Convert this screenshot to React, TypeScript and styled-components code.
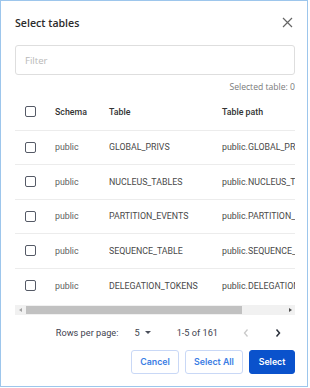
import React from "react";
import styled, { createGlobalStyle } from "styled-components";

const Global = createGlobalStyle`
  html, body { margin: 0; padding: 0; background: #ffffff; }
  body { font-family: "Open Sans", "Noto Sans", sans-serif; }
  * { box-sizing: border-box; }
`;

const Frame = styled.div`
  width: 308px;
  height: 387px;
  border: 1px solid #9dc6ec;
  background: #fff;
  padding: 0 12px 0 14px;
  display: flex;
  flex-direction: column;
`;

const Header = styled.div`
  height: 42px;
  display: flex;
  align-items: center;
  justify-content: space-between;
  padding-top: 1px;
`;

const Title = styled.h2`
  margin: 0;
  font-family: "Open Sans", sans-serif;
  font-size: 10.6px;
  font-weight: 600;
  color: #2b2b2b;
`;

const CloseButton = styled.button`
  border: none;
  background: none;
  padding: 0;
  width: 16px;
  height: 16px;
  margin-right: 0;
  display: flex;
  align-items: center;
  justify-content: center;
  color: #666;
`;

const FilterInput = styled.input`
  margin-top: 2px;
  height: 30px;
  width: 100%;
  border: 1px solid #dedede;
  border-radius: 3px;
  padding: 0 9px;
  font-family: "Open Sans", sans-serif;
  font-size: 9.6px;
  color: #333;
  outline: none;
  &::placeholder { color: #b8b8b8; }
`;

const SelectedCount = styled.div`
  margin-top: 6px;
  height: 12px;
  line-height: 12px;
  text-align: right;
  font-family: "Open Sans", sans-serif;
  font-size: 8.6px;
  color: #7a7a7a;
`;

const TableViewport = styled.div`
  margin-top: 1px;
  width: 100%;
  overflow: hidden;
`;

const Table = styled.table`
  border-collapse: collapse;
  width: 338px;
  font-family: Roboto, sans-serif;
  font-size: 8.8px;
  table-layout: fixed;
`;

const HeadCell = styled.th<{ $w: number }>`
  width: ${(p) => p.$w}px;
  height: 36px;
  padding: 0;
  text-align: left;
  font-weight: 500;
  color: #333;
  border-bottom: 1px solid #ececec;
  white-space: nowrap;
`;

const Cell = styled.td<{ $muted?: boolean }>`
  height: 34.5px;
  padding: 0;
  color: ${(p) => (p.$muted ? "#5e5e5e" : "#4a4a4a")};
  border-bottom: 1px solid #ececec;
  white-space: nowrap;
  overflow: hidden;
`;

const LastRowCell = styled(Cell)`
  border-bottom: none;
`;

const Check = styled.span`
  display: block;
  width: 11px;
  height: 11px;
  margin-left: 10px;
  border: 1.6px solid #555a66;
  border-radius: 2px;
`;

const ScrollTrack = styled.div`
  margin-top: 2px;
  height: 10px;
  background: #f1f1f1;
  display: flex;
  align-items: center;
  justify-content: space-between;
  padding: 0 3px 0 4px;
`;

const ScrollThumb = styled.div`
  height: 8px;
  width: 216px;
  margin-left: 4px;
  margin-right: auto;
  background: #c1c1c1;
`;

const Arrow = styled.span<{ $dir: "l" | "r" }>`
  width: 0;
  height: 0;
  border-top: 2.5px solid transparent;
  border-bottom: 2.5px solid transparent;
  ${(p) =>
    p.$dir === "l"
      ? "border-right: 3px solid #a3a3a3;"
      : "border-left: 3px solid #505050;"}
`;

const Pagination = styled.div`
  margin-top: 3px;
  height: 30px;
  display: flex;
  align-items: center;
  justify-content: flex-end;
  padding-right: 5px;
  font-family: Roboto, sans-serif;
  font-size: 9.2px;
  color: #3f4450;
`;

const RowsLabel = styled.span`
  margin-right: 16px;
`;

const RowsSelect = styled.span`
  display: flex;
  align-items: center;
  gap: 5px;
  margin-right: 26px;
`;

const Caret = styled.span`
  width: 0;
  height: 0;
  border-left: 3px solid transparent;
  border-right: 3px solid transparent;
  border-top: 3px solid #4a4f5a;
`;

const Range = styled.span`
  margin-right: 16px;
`;

const NavButton = styled.button<{ $disabled?: boolean }>`
  width: 24px;
  height: 24px;
  border: none;
  background: none;
  padding: 0;
  display: flex;
  align-items: center;
  justify-content: center;
  color: ${(p) => (p.$disabled ? "#c9c9c9" : "#2a2f3a")};
  & + & { margin-left: 8px; }
`;

const Actions = styled.div`
  margin-top: 2px;
  display: flex;
  justify-content: flex-end;
  gap: 6px;
`;

const Button = styled.button<{ $primary?: boolean; $w: number }>`
  height: 24px;
  width: ${(p) => p.$w}px;
  padding: 0;
  border-radius: 3px;
  font-family: Inter, Roboto, sans-serif;
  font-size: 8.8px;
  font-weight: 600;
  border: 1px solid ${(p) => (p.$primary ? "#0a52cc" : "#c9d8f6")};
  background: ${(p) => (p.$primary ? "#0a52cc" : "#ffffff")};
  color: ${(p) => (p.$primary ? "#ffffff" : "#3b7de4")};
`;

const rows = [
  "GLOBAL_PRIVS",
  "NUCLEUS_TABLES",
  "PARTITION_EVENTS",
  "SEQUENCE_TABLE",
  "DELEGATION_TOKENS",
];

export default function App() {
  return (
    <>
      <Global />
      <Frame>
        <Header>
          <Title>Select tables</Title>
          <CloseButton aria-label="close">
            <svg width="11" height="11" viewBox="0 0 11 11">
              <path d="M1 1L10 10M10 1L1 10" stroke="currentColor" strokeWidth="1.2" />
            </svg>
          </CloseButton>
        </Header>
        <FilterInput placeholder="Filter" />
        <SelectedCount>Selected table: 0</SelectedCount>
        <TableViewport>
          <Table>
            <thead>
              <tr>
                <HeadCell $w={40}>
                  <Check />
                </HeadCell>
                <HeadCell $w={54}>Schema</HeadCell>
                <HeadCell $w={113}>Table</HeadCell>
                <HeadCell $w={131}>Table path</HeadCell>
              </tr>
            </thead>
            <tbody>
              {rows.map((r, i) => {
                const C = i === rows.length - 1 ? LastRowCell : Cell;
                return (
                  <tr key={r}>
                    <C>
                      <Check />
                    </C>
                    <C $muted>public</C>
                    <C>{r}</C>
                    <C>public.{r}</C>
                  </tr>
                );
              })}
            </tbody>
          </Table>
        </TableViewport>
        <ScrollTrack>
          <Arrow $dir="l" />
          <ScrollThumb />
          <Arrow $dir="r" />
        </ScrollTrack>
        <Pagination>
          <RowsLabel>Rows per page:</RowsLabel>
          <RowsSelect>
            5 <Caret />
          </RowsSelect>
          <Range>1-5 of 161</Range>
          <NavButton $disabled aria-label="previous">
            <svg width="8" height="10" viewBox="0 0 8 10">
              <path d="M5.5 1.5L2.5 5L5.5 8.5" stroke="currentColor" strokeWidth="1.3" fill="none" />
            </svg>
          </NavButton>
          <NavButton aria-label="next">
            <svg width="8" height="10" viewBox="0 0 8 10">
              <path d="M2.5 1.5L5.5 5L2.5 8.5" stroke="currentColor" strokeWidth="1.5" fill="none" />
            </svg>
          </NavButton>
        </Pagination>
        <Actions>
          <Button $w={48}>Cancel</Button>
          <Button $w={58}>Select All</Button>
          <Button $w={46} $primary>
            Select
          </Button>
        </Actions>
      </Frame>
    </>
  );
}
